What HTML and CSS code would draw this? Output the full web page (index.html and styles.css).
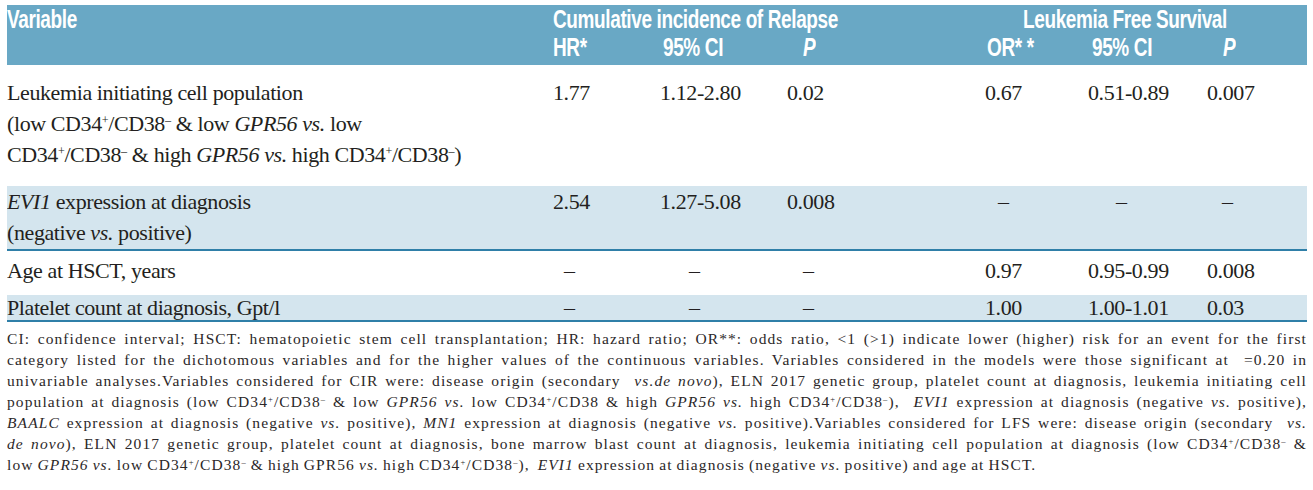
FILE: index.html
```html
<!DOCTYPE html>
<html lang="en">
<head>
<meta charset="utf-8">
<title>Multivariable analysis</title>
<link rel="stylesheet" href="styles.css">
</head>
<body>
<div class="table">
  <div class="thead">
    <div class="h-var"><span class="cond">Variable</span></div>
    <div class="h-cir"><span class="cond">Cumulative incidence of Relapse</span></div>
    <div class="h-lfs"><span class="cond">Leukemia Free Survival</span></div>
    <div class="h-sub s-hr"><span class="cond">HR*</span></div>
    <div class="h-sub s-ci"><span class="cond">95% CI</span></div>
    <div class="h-sub s-p"><span class="cond"><i>P</i></span></div>
    <div class="h-sub s-or"><span class="cond">OR* *</span></div>
    <div class="h-sub s-ci2"><span class="cond">95% CI</span></div>
    <div class="h-sub s-p2"><span class="cond"><i>P</i></span></div>
  </div>

  <div class="row row-1">
    <div class="var">Leukemia initiating cell population<br>(low CD34<sup>+</sup>/CD38<sup>–</sup> &amp; low <i>GPR56 vs.</i> low<br>CD34<sup>+</sup>/CD38<sup>–</sup> &amp; high <i>GPR56 vs.</i> high CD34<sup>+</sup>/CD38<sup>–</sup>)</div>
    <div class="val">1.77</div>
    <div class="val">1.12-2.80</div>
    <div class="val">0.02</div>
    <div class="val">0.67</div>
    <div class="val">0.51-0.89</div>
    <div class="val">0.007</div>
  </div>

  <div class="row row-2 shade ruled">
    <div class="var"><i>EVI1</i> expression at diagnosis<br>(negative <i>vs.</i> positive)</div>
    <div class="val">2.54</div>
    <div class="val">1.27-5.08</div>
    <div class="val">0.008</div>
    <div class="val d-or">–</div>
    <div class="val d-ci2">–</div>
    <div class="val d-p2">–</div>
  </div>

  <div class="row row-3">
    <div class="var">Age at HSCT, years</div>
    <div class="val d-hr">–</div>
    <div class="val d-ci">–</div>
    <div class="val d-p">–</div>
    <div class="val">0.97</div>
    <div class="val">0.95-0.99</div>
    <div class="val">0.008</div>
  </div>

  <div class="row row-4 shade ruled">
    <div class="var">Platelet count at diagnosis, Gpt/l</div>
    <div class="val d-hr">–</div>
    <div class="val d-ci">–</div>
    <div class="val d-p">–</div>
    <div class="val">1.00</div>
    <div class="val">1.00-1.01</div>
    <div class="val">0.03</div>
  </div>

  <div class="notes">
    <div class="line">CI: confidence interval; HSCT: hematopoietic stem cell transplantation; HR: hazard ratio; OR**: odds ratio, &lt;1 (&gt;1) indicate lower (higher) risk for an event for the first</div>
    <div class="line">category listed for the dichotomous variables and for the higher values of the continuous variables. Variables considered in the models were those significant at &nbsp;=0.20 in</div>
    <div class="line">univariable analyses.Variables considered for CIR were: disease origin (secondary &nbsp;<i>vs.de novo</i>), ELN 2017 genetic group, platelet count at diagnosis, leukemia initiating cell</div>
    <div class="line">population at diagnosis (low CD34<sup>+</sup>/CD38<sup>–</sup> &amp; low <i>GPR56 vs.</i> low CD34<sup>+</sup>/CD38 &amp; high <i>GPR56 vs.</i> high CD34<sup>+</sup>/CD38<sup>–</sup>), &nbsp;<i>EVI1</i> expression at diagnosis (negative <i>vs.</i> positive),</div>
    <div class="line"><i>BAALC</i> expression at diagnosis (negative <i>vs.</i> positive), <i>MN1</i> expression at diagnosis (negative <i>vs.</i> positive).Variables considered for LFS were: disease origin (secondary &nbsp;<i>vs.</i></div>
    <div class="line"><i>de novo</i>), ELN 2017 genetic group, platelet count at diagnosis, bone marrow blast count at diagnosis, leukemia initiating cell population at diagnosis (low CD34<sup>+</sup>/CD38<sup>–</sup> &amp;</div>
    <div class="line last">low <i>GPR56 vs.</i> low CD34<sup>+</sup>/CD38<sup>–</sup> &amp; high GPR56 <i>vs.</i> high CD34<sup>+</sup>/CD38<sup>–</sup>), &nbsp;<i>EVI1</i> expression at diagnosis (negative <i>vs.</i> positive) and age at HSCT.</div>
  </div>
</div>
</body>
</html>
```

FILE: styles.css
```css
html, body {
  background: #ffffff;
}
body {
  margin: 5px 6px 0 7px;
  color: #231f20;
  font-family: "Liberation Serif", "Times New Roman", serif;
}
.table {
  width: 1300px;
}
.thead,
.row {
  display: grid;
  grid-template-columns: 546px 107px 127px 198px 103px 119px 100px;
}
.thead {
  background: #69a8c5;
  color: #ffffff;
  font-family: "Liberation Sans", Arial, sans-serif;
  font-weight: bold;
  font-size: 25px;
  letter-spacing: -0.5px;
  line-height: 28px;
  height: 60px;
  box-sizing: border-box;
  padding-bottom: 4px;
  white-space: nowrap;
}
.cond {
  display: inline-block;
  transform: scaleX(0.76);
  transform-origin: 0 50%;
}
.h-var { grid-column: 1; grid-row: 1; }
.h-cir { grid-column: 2 / 5; grid-row: 1; }
.h-lfs { grid-column: 5 / 8; grid-row: 1; padding-left: 38px; }
.h-sub { grid-row: 2; }
.s-hr { grid-column: 2; }
.s-ci { grid-column: 3; padding-left: 3px; }
.s-p { grid-column: 4; padding-left: 16px; }
.s-or { grid-column: 5; padding-left: 2px; }
.s-ci2 { grid-column: 6; padding-left: 4px; }
.s-p2 { grid-column: 7; padding-left: 16px; }

.row {
  font-size: 22px;
  letter-spacing: -0.4px;
  line-height: 31px;
}
.shade {
  background: #d4e5ee;
}
.ruled {
  border-bottom: 2px solid #2f7fa8;
}
.row-1 { padding: 12px 0 16px; }
.row-2 { padding: 0 0 1px; }
.row-3 { padding: 4px 0 9px; }
.row-4 { line-height: 25px; }

.d-hr { padding-left: 11px; }
.d-ci { padding-left: 29px; }
.d-p { padding-left: 16px; }
.d-or { padding-left: 13px; }
.d-ci2 { padding-left: 28px; }
.d-p2 { padding-left: 15px; }

sup {
  font-size: 0.55em;
  line-height: 0;
  vertical-align: 0.6em;
}

.notes {
  padding-top: 6px;
  font-size: 15.5px;
  line-height: 21px;
  letter-spacing: 1.1px;
  word-spacing: -1px;
  color: #2b2728;
}
.line {
  white-space: nowrap;
  text-align: justify;
  text-align-last: justify;
}
.line.last {
  text-align-last: left;
}
```
